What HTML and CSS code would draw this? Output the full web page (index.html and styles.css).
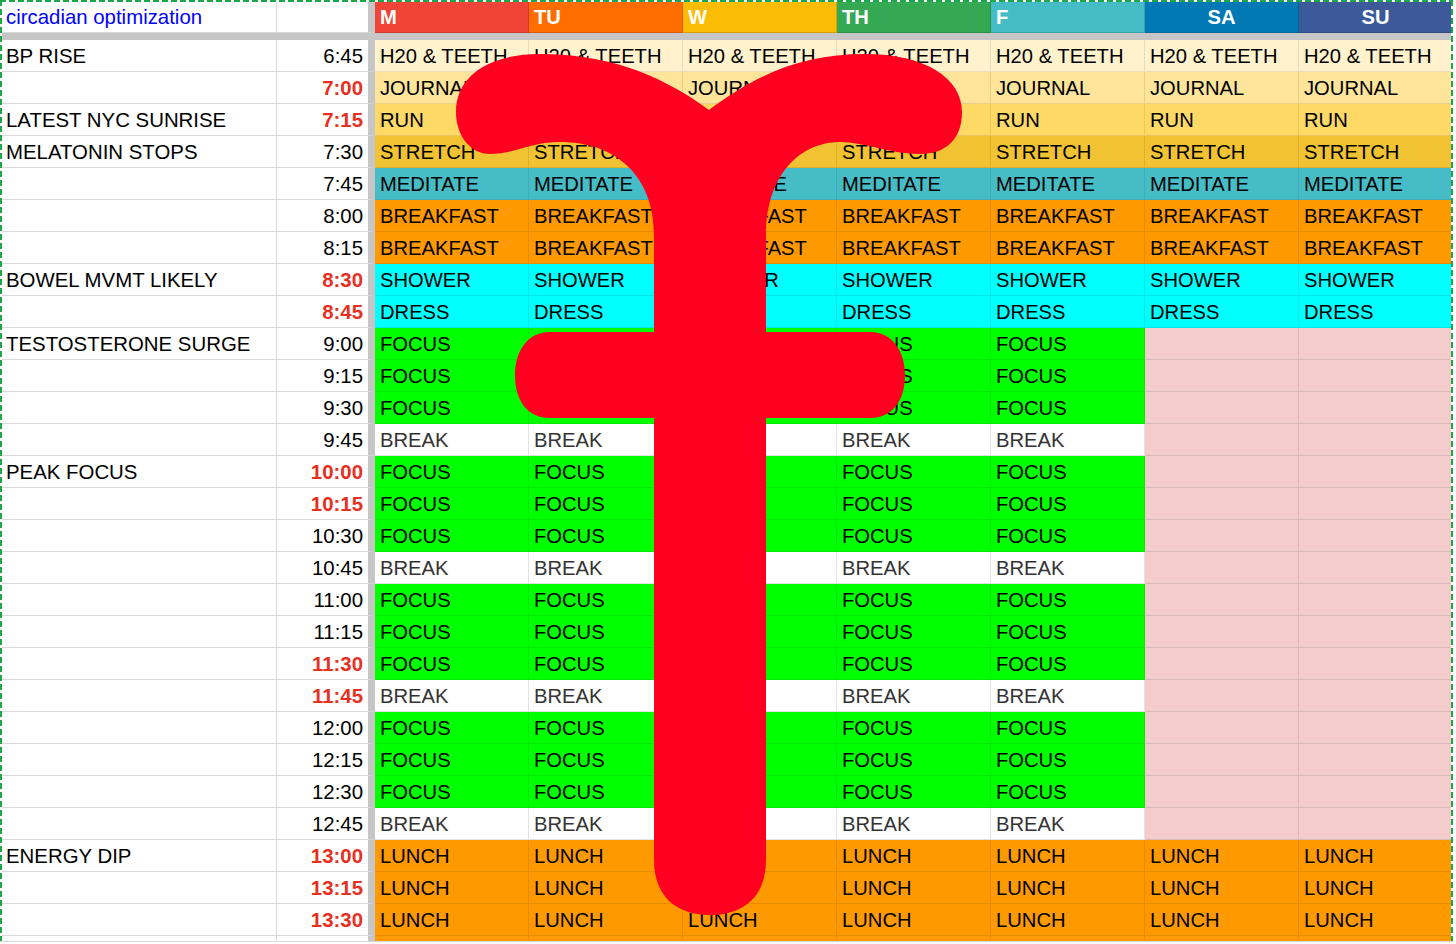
FILE: index.html
```html
<!DOCTYPE html>
<html lang="en">
<head>
<meta charset="utf-8">
<title>circadian optimization</title>
<link rel="stylesheet" href="styles.css">
</head>
<body>
<main class="sheet">
<div class="c label title head">circadian optimization</div><div class="c time head"></div>
<div class="c day head d-m">M</div><div class="c day head d-tu">TU</div><div class="c day head d-w">W</div><div class="c day head d-th">TH</div><div class="c day head d-f">F</div><div class="c day head d-sa mid">SA</div><div class="c day head d-su mid">SU</div>
<div class="freeze"></div>

<div class="c label">BP RISE</div><div class="c time">6:45</div>
<div class="c h2o">H20 &amp; TEETH</div><div class="c h2o">H20 &amp; TEETH</div><div class="c h2o">H20 &amp; TEETH</div><div class="c h2o">H20 &amp; TEETH</div><div class="c h2o">H20 &amp; TEETH</div><div class="c h2o">H20 &amp; TEETH</div><div class="c h2o">H20 &amp; TEETH</div>
<div class="c label"></div><div class="c time red">7:00</div>
<div class="c jour">JOURNAL</div><div class="c jour">JOURNAL</div><div class="c jour">JOURNAL</div><div class="c jour">JOURNAL</div><div class="c jour">JOURNAL</div><div class="c jour">JOURNAL</div><div class="c jour">JOURNAL</div>
<div class="c label">LATEST NYC SUNRISE</div><div class="c time red">7:15</div>
<div class="c run">RUN</div><div class="c run">RUN</div><div class="c run">RUN</div><div class="c run">RUN</div><div class="c run">RUN</div><div class="c run">RUN</div><div class="c run">RUN</div>
<div class="c label">MELATONIN STOPS</div><div class="c time">7:30</div>
<div class="c str">STRETCH</div><div class="c str">STRETCH</div><div class="c str">STRETCH</div><div class="c str">STRETCH</div><div class="c str">STRETCH</div><div class="c str">STRETCH</div><div class="c str">STRETCH</div>
<div class="c label"></div><div class="c time">7:45</div>
<div class="c med">MEDITATE</div><div class="c med">MEDITATE</div><div class="c med">MEDITATE</div><div class="c med">MEDITATE</div><div class="c med">MEDITATE</div><div class="c med">MEDITATE</div><div class="c med">MEDITATE</div>
<div class="c label"></div><div class="c time">8:00</div>
<div class="c org">BREAKFAST</div><div class="c org">BREAKFAST</div><div class="c org">BREAKFAST</div><div class="c org">BREAKFAST</div><div class="c org">BREAKFAST</div><div class="c org">BREAKFAST</div><div class="c org">BREAKFAST</div>
<div class="c label"></div><div class="c time">8:15</div>
<div class="c org">BREAKFAST</div><div class="c org">BREAKFAST</div><div class="c org">BREAKFAST</div><div class="c org">BREAKFAST</div><div class="c org">BREAKFAST</div><div class="c org">BREAKFAST</div><div class="c org">BREAKFAST</div>
<div class="c label">BOWEL MVMT LIKELY</div><div class="c time red">8:30</div>
<div class="c cyan">SHOWER</div><div class="c cyan">SHOWER</div><div class="c cyan">SHOWER</div><div class="c cyan">SHOWER</div><div class="c cyan">SHOWER</div><div class="c cyan">SHOWER</div><div class="c cyan">SHOWER</div>
<div class="c label"></div><div class="c time red">8:45</div>
<div class="c cyan">DRESS</div><div class="c cyan">DRESS</div><div class="c cyan">DRESS</div><div class="c cyan">DRESS</div><div class="c cyan">DRESS</div><div class="c cyan">DRESS</div><div class="c cyan">DRESS</div>

<div class="c label">TESTOSTERONE SURGE</div><div class="c time">9:00</div>
<div class="c foc">FOCUS</div><div class="c foc">FOCUS</div><div class="c foc">FOCUS</div><div class="c foc">FOCUS</div><div class="c foc">FOCUS</div><div class="c off"></div><div class="c off"></div>
<div class="c label"></div><div class="c time">9:15</div>
<div class="c foc">FOCUS</div><div class="c foc">FOCUS</div><div class="c foc">FOCUS</div><div class="c foc">FOCUS</div><div class="c foc">FOCUS</div><div class="c off"></div><div class="c off"></div>
<div class="c label"></div><div class="c time">9:30</div>
<div class="c foc">FOCUS</div><div class="c foc">FOCUS</div><div class="c foc">FOCUS</div><div class="c foc">FOCUS</div><div class="c foc">FOCUS</div><div class="c off"></div><div class="c off"></div>
<div class="c label"></div><div class="c time">9:45</div>
<div class="c brk">BREAK</div><div class="c brk">BREAK</div><div class="c brk">BREAK</div><div class="c brk">BREAK</div><div class="c brk">BREAK</div><div class="c off"></div><div class="c off"></div>

<div class="c label">PEAK FOCUS</div><div class="c time red">10:00</div>
<div class="c foc">FOCUS</div><div class="c foc">FOCUS</div><div class="c foc">FOCUS</div><div class="c foc">FOCUS</div><div class="c foc">FOCUS</div><div class="c off"></div><div class="c off"></div>
<div class="c label"></div><div class="c time red">10:15</div>
<div class="c foc">FOCUS</div><div class="c foc">FOCUS</div><div class="c foc">FOCUS</div><div class="c foc">FOCUS</div><div class="c foc">FOCUS</div><div class="c off"></div><div class="c off"></div>
<div class="c label"></div><div class="c time">10:30</div>
<div class="c foc">FOCUS</div><div class="c foc">FOCUS</div><div class="c foc">FOCUS</div><div class="c foc">FOCUS</div><div class="c foc">FOCUS</div><div class="c off"></div><div class="c off"></div>
<div class="c label"></div><div class="c time">10:45</div>
<div class="c brk">BREAK</div><div class="c brk">BREAK</div><div class="c brk">BREAK</div><div class="c brk">BREAK</div><div class="c brk">BREAK</div><div class="c off"></div><div class="c off"></div>

<div class="c label"></div><div class="c time">11:00</div>
<div class="c foc">FOCUS</div><div class="c foc">FOCUS</div><div class="c foc">FOCUS</div><div class="c foc">FOCUS</div><div class="c foc">FOCUS</div><div class="c off"></div><div class="c off"></div>
<div class="c label"></div><div class="c time">11:15</div>
<div class="c foc">FOCUS</div><div class="c foc">FOCUS</div><div class="c foc">FOCUS</div><div class="c foc">FOCUS</div><div class="c foc">FOCUS</div><div class="c off"></div><div class="c off"></div>
<div class="c label"></div><div class="c time red">11:30</div>
<div class="c foc">FOCUS</div><div class="c foc">FOCUS</div><div class="c foc">FOCUS</div><div class="c foc">FOCUS</div><div class="c foc">FOCUS</div><div class="c off"></div><div class="c off"></div>
<div class="c label"></div><div class="c time red">11:45</div>
<div class="c brk">BREAK</div><div class="c brk">BREAK</div><div class="c brk">BREAK</div><div class="c brk">BREAK</div><div class="c brk">BREAK</div><div class="c off"></div><div class="c off"></div>

<div class="c label"></div><div class="c time">12:00</div>
<div class="c foc">FOCUS</div><div class="c foc">FOCUS</div><div class="c foc">FOCUS</div><div class="c foc">FOCUS</div><div class="c foc">FOCUS</div><div class="c off"></div><div class="c off"></div>
<div class="c label"></div><div class="c time">12:15</div>
<div class="c foc">FOCUS</div><div class="c foc">FOCUS</div><div class="c foc">FOCUS</div><div class="c foc">FOCUS</div><div class="c foc">FOCUS</div><div class="c off"></div><div class="c off"></div>
<div class="c label"></div><div class="c time">12:30</div>
<div class="c foc">FOCUS</div><div class="c foc">FOCUS</div><div class="c foc">FOCUS</div><div class="c foc">FOCUS</div><div class="c foc">FOCUS</div><div class="c off"></div><div class="c off"></div>
<div class="c label"></div><div class="c time">12:45</div>
<div class="c brk">BREAK</div><div class="c brk">BREAK</div><div class="c brk">BREAK</div><div class="c brk">BREAK</div><div class="c brk">BREAK</div><div class="c off"></div><div class="c off"></div>

<div class="c label">ENERGY DIP</div><div class="c time red">13:00</div>
<div class="c org">LUNCH</div><div class="c org">LUNCH</div><div class="c org">LUNCH</div><div class="c org">LUNCH</div><div class="c org">LUNCH</div><div class="c org">LUNCH</div><div class="c org">LUNCH</div>
<div class="c label"></div><div class="c time red">13:15</div>
<div class="c org">LUNCH</div><div class="c org">LUNCH</div><div class="c org">LUNCH</div><div class="c org">LUNCH</div><div class="c org">LUNCH</div><div class="c org">LUNCH</div><div class="c org">LUNCH</div>
<div class="c label"></div><div class="c time red">13:30</div>
<div class="c org">LUNCH</div><div class="c org">LUNCH</div><div class="c org">LUNCH</div><div class="c org">LUNCH</div><div class="c org">LUNCH</div><div class="c org">LUNCH</div><div class="c org">LUNCH</div>

<div class="c label stub"></div><div class="c time stub"></div>
<div class="c org stub"></div><div class="c org stub"></div><div class="c org stub"></div><div class="c org stub"></div><div class="c org stub"></div><div class="c org stub"></div><div class="c org stub"></div>
</main>
<svg class="glyph" viewBox="0 0 1456 944" aria-hidden="true">
<path d="M456 112 C456 75 490 54 540 54 C600 54 655 70 709 110 C760 72 805 54 865 54 C925 54 962 78 962 112 C962 140 945 154 920 154 C890 154 865 142 840 142 C800 142 766 175 766 235 L766 332 L870 332 C893 332 905 352 905 375 C905 400 893 418 870 418 L766 418 L766 860 C766 895 745 915 710 915 C675 915 654 895 654 860 L654 418 L550 418 C527 418 515 400 515 375 C515 352 527 332 550 332 L654 332 L654 235 C654 175 615 142 560 142 C530 142 515 154 490 154 C470 154 456 135 456 112 Z"/>
</svg>
</body>
</html>
```

FILE: styles.css
```css
* { box-sizing: border-box; }

html, body { margin: 0; height: 944px; overflow: hidden; background: #fff; }

body { font-family: "Liberation Sans", Arial, sans-serif; color: #000; }

.sheet {
  position: relative;
  display: grid;
  grid-template-columns: 275px 98px repeat(7, 154px);
  grid-template-rows: 33px 7px repeat(28, 32px) 5px;
  width: 1453px;
  height: 942px;
  padding-left: 2px;
  border-bottom: 1px solid #d9d9d9;
}

/* dashed selection outline that lies over the grid */
.sheet::after {
  content: "";
  position: absolute;
  left: 0;
  top: 0;
  right: 0;
  bottom: 0;
  pointer-events: none;
  background-image:
    repeating-linear-gradient(90deg, #1aa84a 0 6px, #ffffff 6px 9px),
    repeating-linear-gradient(180deg, #1aa84a 0 6px, #ffffff 6px 9px),
    repeating-linear-gradient(180deg, #1aa84a 0 6px, #ffffff 6px 9px);
  background-size: 100% 2px, 2px 100%, 2px 100%;
  background-position: 0 0, 0 0, 100% 0;
  background-repeat: no-repeat;
}

.c {
  display: flex;
  align-items: center;
  padding: 1px 5px 0 5px;
  font-size: 20.2px;
  white-space: nowrap;
  overflow: hidden;
  border-right: 1px solid #d9d9d9;
  border-bottom: 1px solid #d9d9d9;
}

.head { padding-top: 2px; }

.label { padding-left: 4px; font-size: 20.4px; }
.title { color: #0000ff; }

.time {
  justify-content: flex-end;
  font-size: 20.4px;
  border-right: 7px solid #c6c6c6;
}
.red { color: #e8301f; font-weight: 700; }

.freeze { grid-column: 1 / -1; background: #c6c6c6; }

.day { color: #fff; font-weight: 700; border-color: rgba(0, 0, 0, .14); }
.mid { justify-content: center; }
.d-m { background: #ef4437; }
.d-tu { background: #ff6d01; }
.d-w { background: #fbbc04; }
.d-th { background: #34a853; }
.d-f { background: #46bdc6; }
.d-sa { background: #0079b4; }
.d-su { background: #3c5a99; }

.h2o { background: #fff2cc; border-color: #e8dcb9; }
.jour { background: #ffe599; border-color: #e8d08b; }
.run { background: #ffd966; border-color: #e8c55d; }
.str { background: #f1c232; border-color: #dbb02e; }
.med { background: #46bdc6; border-color: #40acb4; }
.org { background: #ff9900; border-color: #e88b00; }
.cyan { background: #00ffff; border-color: #00e8e8; }
.foc { background: #00ff00; border-color: #00e800; }
.brk { background: #fff; color: #333; border-color: #e3e3e3; }
.off { background: #f4cccc; border-color: #d9b8b8; }
.stub { padding: 0; border-bottom: 0; }

.glyph { position: absolute; left: 0; top: 0; width: 1456px; height: 944px; pointer-events: none; }
.glyph path { fill: #ff0020; }
```
